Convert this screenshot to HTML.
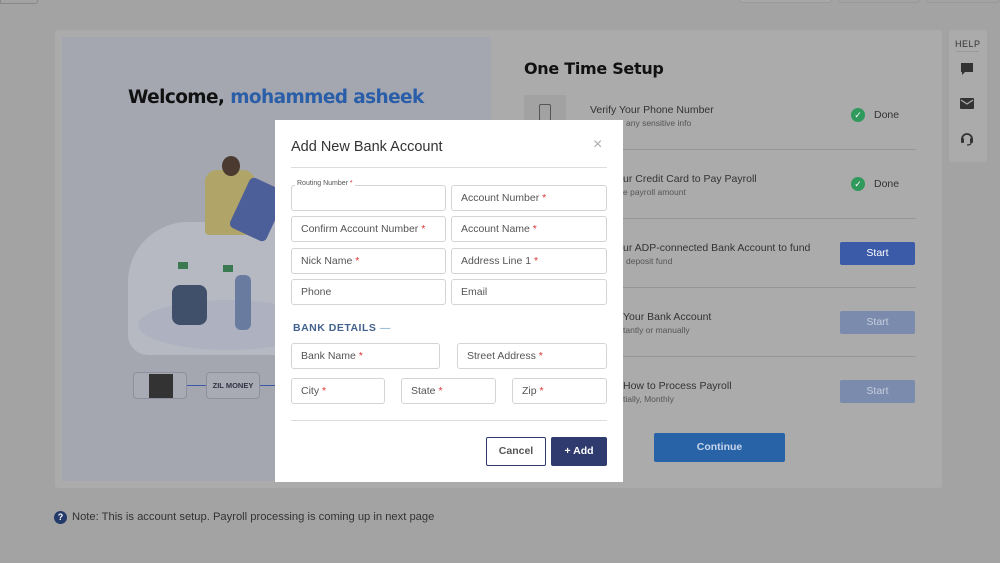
<!DOCTYPE html>
<html><head><meta charset="utf-8"><style>
*{box-sizing:border-box;margin:0;padding:0}
body{width:1000px;height:563px;background:#a3a3a3;font-family:"Liberation Sans",sans-serif;position:relative;overflow:hidden;color:#333}
.a{position:absolute}
.card{left:55px;top:30px;width:887px;height:458px;background:#ababab;border-radius:3px}
.left{left:62px;top:37px;width:429px;height:444px;background:#a4a7b0}
.help{left:949px;top:30px;width:38px;height:132px;background:#ababab;border-radius:3px}
.modal{left:275px;top:120px;width:348px;height:362px;background:#fff}
.f{position:absolute;height:26px;border:1px solid #d4d4d4;border-radius:3px;font-size:10.5px;color:#555;padding-left:9px;line-height:25px}
.f b{color:#d33;font-weight:normal}
.row{font-size:10.5px;color:#333}
.sub{font-size:8.5px;color:#555}
.sep{height:1px;background:#969696;left:524px;width:392px}
.btn{width:75px;height:23px;border-radius:2px;color:#fff;font-size:10.5px;text-align:center;line-height:23px}
.chk{width:14px;height:14px;border-radius:50%;background:#2f9a5c;color:#fff;font-size:9px;text-align:center;line-height:14px}
</style></head><body>
<div class="a" style="left:0;top:0;width:38px;height:4px;border:1px solid #888;border-top:none;border-radius:0 0 3px 0"></div>
<div class="a" style="left:739px;top:0;width:93px;height:3px;border:1px solid #999;border-top:none;border-radius:0 0 3px 3px;background:#a8a8a8"></div>
<div class="a" style="left:838px;top:0;width:82px;height:3px;border:1px solid #999;border-top:none;border-radius:0 0 3px 3px"></div>
<div class="a" style="left:926px;top:0;width:74px;height:3px;border:1px solid #999;border-top:none;border-radius:0 0 3px 3px"></div>
<div class="a card"></div>
<div class="a left"></div>
<div class="a" style="left:128px;top:87px;font-family:'DejaVu Sans',sans-serif;font-weight:bold;font-size:18.5px;color:#111;letter-spacing:-0.6px">Welcome, <span style="color:#2a5ea8">mohammed asheek</span></div>
<div class="a" style="left:128px;top:222px;width:200px;height:133px;background:#b6b8c2;border-radius:60px 60px 20px 20px"></div>
<div class="a" style="left:138px;top:300px;width:180px;height:50px;background:#aeb1c0;border-radius:50%"></div>
<div class="a" style="left:205px;top:170px;width:50px;height:65px;background:#b0a468;border-radius:12px 12px 4px 4px"></div>
<div class="a" style="left:222px;top:156px;width:18px;height:20px;background:#4a3a30;border-radius:50%"></div>
<div class="a" style="left:238px;top:182px;width:40px;height:55px;background:#4d5f98;border-radius:5px;transform:rotate(25deg)"></div>
<div class="a" style="left:172px;top:285px;width:35px;height:40px;background:#40506a;border-radius:8px"></div>
<div class="a" style="left:235px;top:275px;width:16px;height:55px;background:#6a7ba0;border-radius:6px"></div>
<div class="a" style="left:178px;top:262px;width:10px;height:7px;background:#3b7a50"></div>
<div class="a" style="left:223px;top:265px;width:10px;height:7px;background:#3b7a50"></div>
<div class="a" style="left:133px;top:372px;width:54px;height:27px;border:1px solid #8e90a0;border-radius:4px;background:#a8aab4"></div>
<div class="a" style="left:149px;top:374px;width:24px;height:24px;background:#333"></div>
<div class="a" style="left:206px;top:372px;width:54px;height:27px;border:1px solid #8e90a0;border-radius:4px;background:#a8aab4;font-size:7.5px;font-weight:bold;color:#334;text-align:center;line-height:26px">ZIL MONEY</div>
<div class="a" style="left:187px;top:385px;width:19px;height:1px;background:#3a5aa8"></div>
<div class="a" style="left:260px;top:385px;width:15px;height:1px;background:#3a5aa8"></div>

<div class="a" style="left:524px;top:59px;font-family:'DejaVu Sans',sans-serif;font-size:16px;font-weight:bold;color:#111;letter-spacing:-0.3px">One Time Setup</div>
<div class="a" style="left:524px;top:95px;width:42px;height:35px;background:#a2a2a2"></div>
<div class="a" style="left:539px;top:104px;width:12px;height:17px;border:1.5px solid #555;border-radius:2px"></div>
<div class="a row" style="left:590px;top:104px">Verify Your Phone Number</div>
<div class="a sub" style="left:626px;top:118px">any sensitive info</div>
<div class="a chk" style="left:851px;top:108px">✓</div><div class="a row" style="left:874px;top:109px">Done</div>
<div class="a sep" style="top:149px"></div>
<div class="a row" style="left:623px;top:173px">ur Credit Card to Pay Payroll</div>
<div class="a sub" style="left:623px;top:187px">e payroll amount</div>
<div class="a chk" style="left:851px;top:177px">✓</div><div class="a row" style="left:874px;top:178px">Done</div>
<div class="a sep" style="top:218px"></div>
<div class="a row" style="left:623px;top:242px">ur ADP-connected Bank Account to fund</div>
<div class="a sub" style="left:626px;top:256px">deposit fund</div>
<div class="a btn" style="left:840px;top:242px;background:#3b5aa8">Start</div>
<div class="a sep" style="top:287px"></div>
<div class="a row" style="left:623px;top:311px">Your Bank Account</div>
<div class="a sub" style="left:623px;top:325px">tantly or manually</div>
<div class="a btn" style="left:840px;top:311px;background:#7a8bae;color:#c8cfdd">Start</div>
<div class="a sep" style="top:356px"></div>
<div class="a row" style="left:623px;top:380px">How to Process Payroll</div>
<div class="a sub" style="left:623px;top:394px">tially, Monthly</div>
<div class="a btn" style="left:840px;top:380px;background:#7a8bae;color:#c8cfdd">Start</div>
<div class="a btn" style="left:654px;top:433px;width:131px;height:29px;line-height:29px;background:#2863a8;color:#c8d6ec;font-weight:bold;font-size:10.5px">Continue</div>

<div class="a help"></div>
<div class="a" style="left:955px;top:39px;font-size:9px;color:#333;letter-spacing:0.5px">HELP</div>
<div class="a" style="left:956px;top:51px;width:23px;height:1px;background:#999"></div>
<svg class="a" style="left:960px;top:62px" width="14" height="14" viewBox="0 0 14 14"><path d="M1 1h12v9H5l-3 3v-3H1z" fill="#333"/></svg>
<svg class="a" style="left:960px;top:98px" width="14" height="11" viewBox="0 0 14 11"><rect width="14" height="11" rx="1" fill="#333"/><path d="M1 2l6 4 6-4" stroke="#ababab" stroke-width="1.3" fill="none"/></svg>
<svg class="a" style="left:960px;top:131px" width="14" height="15" viewBox="0 0 14 15"><path d="M2 8a5 5 0 0110 0" stroke="#333" stroke-width="1.8" fill="none"/><rect x="1" y="7" width="3" height="5" rx="1" fill="#333"/><rect x="10" y="7" width="3" height="5" rx="1" fill="#333"/><path d="M11 12c0 2-3 2-4 2" stroke="#333" stroke-width="1.3" fill="none"/></svg>

<div class="a" style="left:54px;top:511px;width:13px;height:13px;border-radius:50%;background:#243a6a;color:#fff;font-size:9px;font-weight:bold;text-align:center;line-height:13px">?</div>
<div class="a" style="left:72px;top:511px;font-size:11.2px;color:#333">Note: This is account setup. Payroll processing is coming up in next page</div>

<div class="a modal">
  <div class="a" style="left:16px;top:19px;font-size:14.5px;color:#333">Add New Bank Account</div>
  <div class="a" style="left:318px;top:16px;font-size:16px;color:#aaa;font-weight:lighter">×</div>
  <div class="a" style="left:16px;top:47px;width:316px;height:1px;background:#ddd"></div>
  <div class="f" style="left:16px;top:65px;width:155px"></div>
  <div class="a" style="left:20px;top:60px;background:#fff;padding:0 2px;font-size:7px;color:#555">Routing Number <span style="color:#d33">*</span></div>
  <div class="f" style="left:176px;top:65px;width:156px">Account Number <b>*</b></div>
  <div class="f" style="left:16px;top:96px;width:155px">Confirm Account Number <b>*</b></div>
  <div class="f" style="left:176px;top:96px;width:156px">Account Name <b>*</b></div>
  <div class="f" style="left:16px;top:128px;width:155px">Nick Name <b>*</b></div>
  <div class="f" style="left:176px;top:128px;width:156px">Address Line 1 <b>*</b></div>
  <div class="f" style="left:16px;top:159px;width:155px">Phone</div>
  <div class="f" style="left:176px;top:159px;width:156px">Email</div>
  <div class="a" style="left:18px;top:202px;font-size:10.5px;font-weight:bold;color:#44628e;letter-spacing:0.5px">BANK DETAILS <span style="color:#6aa0c8;font-weight:normal">—</span></div>
  <div class="f" style="left:16px;top:223px;width:149px">Bank Name <b>*</b></div>
  <div class="f" style="left:182px;top:223px;width:150px">Street Address <b>*</b></div>
  <div class="f" style="left:16px;top:258px;width:94px">City <b>*</b></div>
  <div class="f" style="left:126px;top:258px;width:95px">State <b>*</b></div>
  <div class="f" style="left:237px;top:258px;width:95px">Zip <b>*</b></div>
  <div class="a" style="left:16px;top:300px;width:316px;height:1px;background:#ddd"></div>
  <div class="a" style="left:211px;top:317px;width:60px;height:29px;border:1px solid #2f3a6a;border-radius:2px;font-size:10.5px;font-weight:bold;color:#555;text-align:center;line-height:27px">Cancel</div>
  <div class="a" style="left:276px;top:317px;width:56px;height:29px;background:#2f3a6e;border-radius:2px;font-size:10.5px;font-weight:bold;color:#fff;text-align:center;line-height:29px">+ Add</div>
</div>
</body></html>
